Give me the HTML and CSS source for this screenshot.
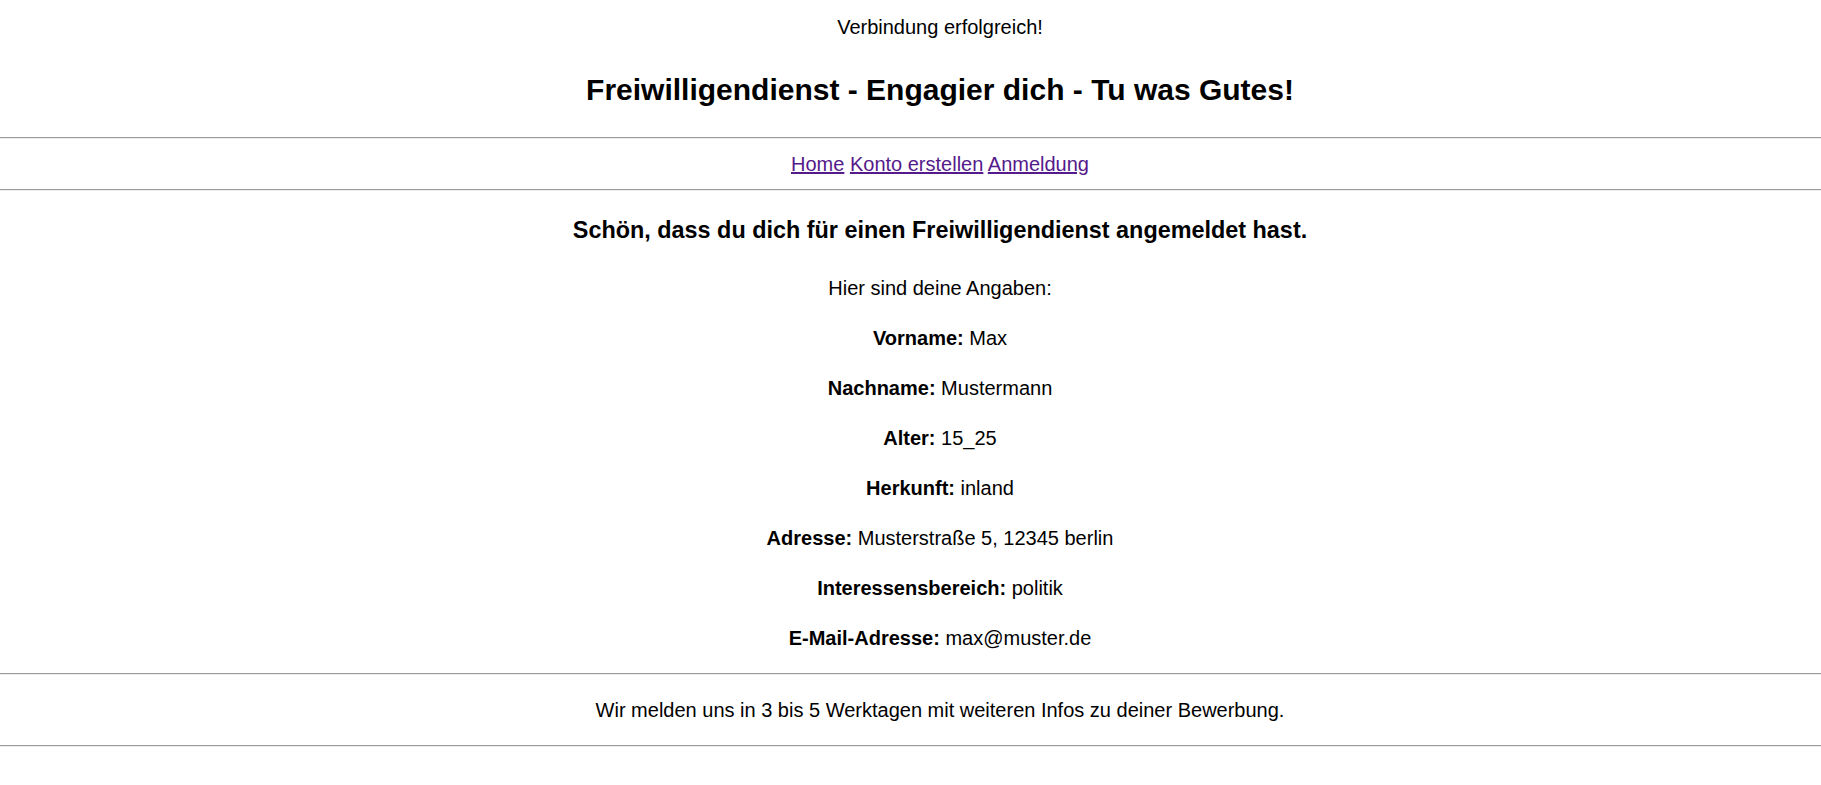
FILE: index.html
```html
<!DOCTYPE html>
<html lang="de">
<head>
<meta charset="utf-8">
<title>Freiwilligendienst</title>
<link rel="stylesheet" href="styles.css">
</head>
<body>
<header class="site-header block">
  <p class="status">Verbindung erfolgreich!</p>
  <h2 class="title">Freiwilligendienst - Engagier dich - Tu was Gutes!</h2>
</header>
<hr class="rule">
<nav class="nav block">
  <a href="#home">Home</a> <a href="#konto">Konto erstellen</a> <a href="#anmeldung">Anmeldung</a>
</nav>
<hr class="rule">
<main class="content block">
  <h3 class="thanks">Schön, dass du dich für einen Freiwilligendienst angemeldet hast.</h3>
  <p class="intro">Hier sind deine Angaben:</p>
  <p class="item"><b>Vorname:</b> Max</p>
  <p class="item"><b>Nachname:</b> Mustermann</p>
  <p class="item"><b>Alter:</b> 15_25</p>
  <p class="item"><b>Herkunft:</b> inland</p>
  <p class="item"><b>Adresse:</b> Musterstraße 5, 12345 berlin</p>
  <p class="item"><b>Interessensbereich:</b> politik</p>
  <p class="item"><b>E-Mail-Adresse:</b> max@muster.de</p>
</main>
<hr class="rule rule-after-content">
<footer class="footer block">
  <p class="footer-text">Wir melden uns in 3 bis 5 Werktagen mit weiteren Infos zu deiner Bewerbung.</p>
</footer>
<hr class="rule rule-after-footer">
</body>
</html>
```

FILE: styles.css
```css
html, body {
  background: #ffffff;
}

body {
  margin: 0;
  font-family: "Liberation Sans", Arial, sans-serif;
  font-size: 20px;
  line-height: 23px;
  color: #000000;
  text-align: center;
}

.block {
  padding-left: 59px;
}

.site-header {
  padding-top: 16px;
}

.status {
  margin: 0;
}

.title {
  margin: 34px 0 0;
  font-size: 30px;
  line-height: 34px;
  font-weight: bold;
}

.rule {
  margin: 0;
  height: 0;
  border: none;
  border-top: 1px solid #9a9a9a;
  border-bottom: 1px solid #eeeeee;
}

.site-header + .rule {
  margin-top: 30px;
}

.nav {
  padding-top: 14px;
  padding-bottom: 13px;
}

.nav a {
  color: #551a8b;
  text-decoration: underline;
}

.content {
  padding-top: 26px;
}

.thanks {
  margin: 0;
  font-size: 23.4px;
  line-height: 27px;
  font-weight: bold;
}

.intro {
  margin: 33px 0 0;
}

.item {
  margin: 27px 0 0;
}

.rule-after-content {
  margin-top: 23px;
}

.footer {
  padding-top: 24px;
  padding-bottom: 23px;
}

.footer-text {
  margin: 0;
}
```
